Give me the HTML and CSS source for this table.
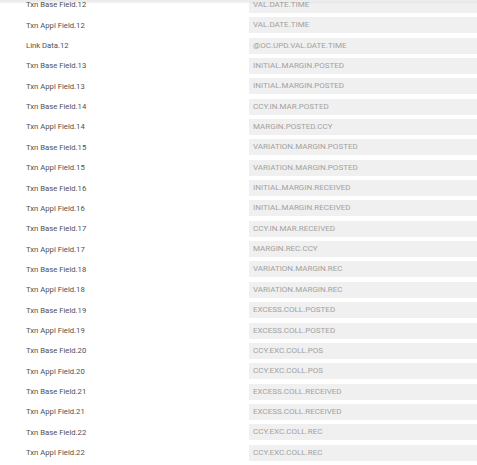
FILE: index.html
```html
<!DOCTYPE html>
<html>
	<head>
		<title>Field Mapping</title>
		<link rel="stylesheet" href="styles.css">
	</head>
	<body>
	<div class="topbar"></div>
	<div class="fields">
		<div class="row"><span class="label">Txn Base Field.12</span><span class="value">VAL.DATE.TIME</span></div>
		<div class="row"><span class="label">Txn Appl Field.12</span><span class="value">VAL.DATE.TIME</span></div>
		<div class="row"><span class="label">Link Data.12</span><span class="value">@OC.UPD.VAL.DATE.TIME</span></div>
		<div class="row"><span class="label">Txn Base Field.13</span><span class="value">INITIAL.MARGIN.POSTED</span></div>
		<div class="row"><span class="label">Txn Appl Field.13</span><span class="value">INITIAL.MARGIN.POSTED</span></div>
		<div class="row"><span class="label">Txn Base Field.14</span><span class="value">CCY.IN.MAR.POSTED</span></div>
		<div class="row"><span class="label">Txn Appl Field.14</span><span class="value">MARGIN.POSTED.CCY</span></div>
		<div class="row"><span class="label">Txn Base Field.15</span><span class="value">VARIATION.MARGIN.POSTED</span></div>
		<div class="row"><span class="label">Txn Appl Field.15</span><span class="value">VARIATION.MARGIN.POSTED</span></div>
		<div class="row"><span class="label">Txn Base Field.16</span><span class="value">INITIAL.MARGIN.RECEIVED</span></div>
		<div class="row"><span class="label">Txn Appl Field.16</span><span class="value">INITIAL.MARGIN.RECEIVED</span></div>
		<div class="row"><span class="label">Txn Base Field.17</span><span class="value">CCY.IN.MAR.RECEIVED</span></div>
		<div class="row"><span class="label">Txn Appl Field.17</span><span class="value">MARGIN.REC.CCY</span></div>
		<div class="row"><span class="label">Txn Base Field.18</span><span class="value">VARIATION.MARGIN.REC</span></div>
		<div class="row"><span class="label">Txn Appl Field.18</span><span class="value">VARIATION.MARGIN.REC</span></div>
		<div class="row"><span class="label">Txn Base Field.19</span><span class="value">EXCESS.COLL.POSTED</span></div>
		<div class="row"><span class="label">Txn Appl Field.19</span><span class="value">EXCESS.COLL.POSTED</span></div>
		<div class="row"><span class="label">Txn Base Field.20</span><span class="value">CCY.EXC.COLL.POS</span></div>
		<div class="row"><span class="label">Txn Appl Field.20</span><span class="value">CCY.EXC.COLL.POS</span></div>
		<div class="row"><span class="label">Txn Base Field.21</span><span class="value">EXCESS.COLL.RECEIVED</span></div>
		<div class="row"><span class="label">Txn Appl Field.21</span><span class="value">EXCESS.COLL.RECEIVED</span></div>
		<div class="row"><span class="label">Txn Base Field.22</span><span class="value">CCY.EXC.COLL.REC</span></div>
		<div class="row"><span class="label">Txn Appl Field.22</span><span class="value">CCY.EXC.COLL.REC</span></div>
	</div>
	</body>
</html>
```
FILE: styles.css
```css
body {
	margin: 0;
	background-color: #fff;
	font-family: Roboto, "Liberation Sans", sans-serif;
	overflow: hidden;
}
.topbar {
	position: fixed;
	top: 0;
	left: 0;
	right: 0;
	height: 2px;
	background-color: #ececec;
	box-shadow: 0 1px 2px rgba(0, 0, 0, 0.06);
	z-index: 2;
}
.fields {
	margin-top: -5.4px;
}
.row {
	display: grid;
	grid-template-columns: 249px 1fr;
	align-items: center;
	height: 20.36px;
}
.label {
	padding-left: 26px;
	font-size: 7.7px;
	color: #505050;
}
.value {
	height: 16px;
	line-height: 16px;
	padding-left: 4px;
	font-size: 8px;
	color: #a2a2a2;
	background-color: #f0f0f0;
}
```
